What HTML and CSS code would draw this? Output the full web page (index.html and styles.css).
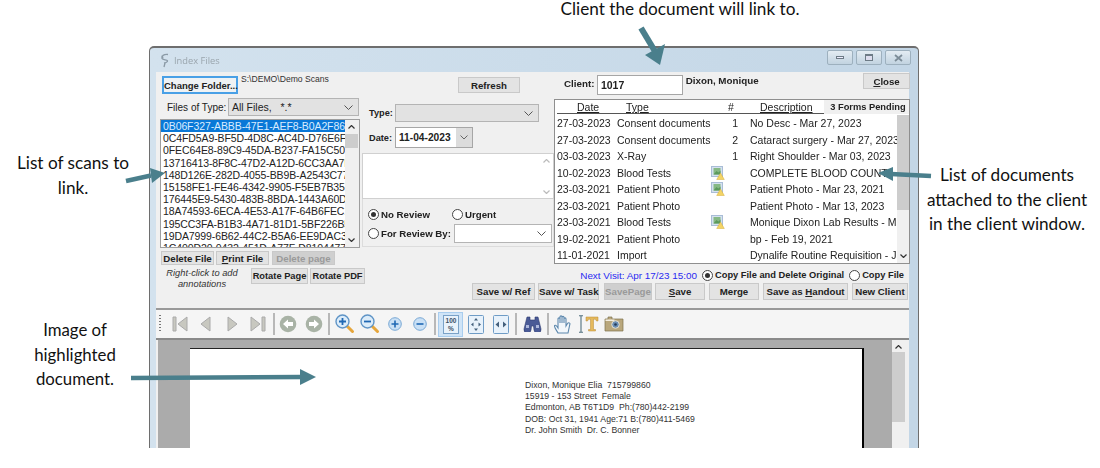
FILE: index.html
```html
<!DOCTYPE html>
<html lang="en">
<head>
<meta charset="utf-8">
<title>Index Files</title>
<link rel="stylesheet" href="styles.css">
</head>
<body>
<svg class="defs" width="0" height="0" aria-hidden="true">
  <symbol id="thumb" viewBox="0 0 14 14">
    <rect x="0.5" y="0.5" width="11" height="10" fill="#d5e1f0" stroke="#a9bdd6"/>
    <rect x="2.500" y="2" width="7" height="6.500" fill="#86b985"/>
    <path d="M2.500 8.500l3-3.500 2 1.500 2-2v4z" fill="#5c9a5c"/>
    <path d="M9.500 7l3.800 6.500H5.700z" fill="#f3d465" stroke="#d6ae3a" stroke-width=".5"/>
  </symbol>
  <symbol id="zoomlens" viewBox="0 0 20 20">
    <path d="M11.5 11.5l6 6" stroke="#e6a63c" stroke-width="3" stroke-linecap="round"/>
    <circle cx="7.5" cy="7.5" r="6.5" fill="#dcecf9" stroke="#5f94c6" stroke-width="1.4"/>
  </symbol>
</svg>

<p class="caption caption-top">Client the document will link to.</p>
<p class="caption caption-scans">List of scans to<br>link.</p>
<p class="caption caption-docs">List of documents<br>attached to the client<br>in the client window.</p>
<p class="caption caption-image">Image of<br>highlighted<br>document.</p>

<section class="window">
  <header class="titlebar">
    <svg class="app-icon" width="12" height="15" viewBox="0 0 12 15"><path d="M9 1.5C5 1 2 3 3 5.500c.8 1.800 5 .8 5.500 2.200.4 1.300-2 2-3.500 2.300M6 10l-1 4M3 2.500l1 3" fill="none" stroke="#8b9aa6" stroke-width="1.300"/></svg>
    <span class="title-text">Index Files</span>
    <div class="win-buttons">
      <span class="win-btn"><i class="glyph-min"></i></span>
      <span class="win-btn"><i class="glyph-max"></i></span>
      <span class="win-btn"><svg width="9" height="8" viewBox="0 0 9 8"><path d="M1 1l7 6M8 1L1 7" stroke="#7c8c98" stroke-width="1.800"/></svg></span>
    </div>
  </header>

  <div class="content">
    <div class="upper">
      <div class="col-left">
        <div class="folder-row">
          <button class="btn btn-focus">Change Folder...</button>
          <span class="path">S:\DEMO\Demo Scans</span>
        </div>
        <div class="type-row">
          <span class="type-label">Files of Type:</span>
          <div class="select select-files"><span>All Files,&nbsp;&nbsp; *.*</span><svg class="chev" width="9" height="5" viewBox="0 0 9 5"><path d="M.5.5l4 4 4-4" fill="none" stroke="#555"/></svg></div>
        </div>
        <div class="filelist">
          <div class="files">
            <div class="file file-selected">0B06F327-ABBB-47E1-AEF8-B0A2F86A6E3C</div>
            <div class="file">0C4FD5A9-BF5D-4D8C-AC4D-D76E6FF1A2B0</div>
            <div class="file">0FEC64E8-89C9-45DA-B237-FA15C5071D2E</div>
            <div class="file">13716413-8F8C-47D2-A12D-6CC3AA7B91F0</div>
            <div class="file">148D126E-282D-4055-BB9B-A2543C77D1A0</div>
            <div class="file">15158FE1-FE46-4342-9905-F5EB7B357C11</div>
            <div class="file">176445E9-5430-483B-8BDA-1443A60D0C12</div>
            <div class="file">18A74593-6ECA-4E53-A17F-64B6FEC1C0A1</div>
            <div class="file">195CC3FA-B1B3-4A71-81D1-5BF226B5E1F0</div>
            <div class="file">19DA7999-6B62-44C2-B5A6-EE9DAC32A0D1</div>
            <div class="file">1C400D20-0432-451D-A77F-D8104477A1B2</div>
          </div>
          <div class="scroll scroll-list">
            <svg class="arrow-up" width="7" height="4" viewBox="0 0 7 4"><path d="M.5 3.500l3-3 3 3" fill="none" stroke="#333" stroke-width="1.200"/></svg>
            <i class="thumb-list"></i>
            <svg class="arrow-down" width="7" height="4" viewBox="0 0 7 4"><path d="M.5.500l3 3 3-3" fill="none" stroke="#333" stroke-width="1.200"/></svg>
          </div>
        </div>
        <div class="file-actions">
          <button class="btn btn-file">Delete File</button>
          <button class="btn btn-file"><u>P</u>rint File</button>
          <button class="btn btn-file btn-disabled">Delete page</button>
        </div>
      </div>

      <div class="col-mid">
        <button class="btn btn-refresh">Refresh</button>
        <div class="field-row field-type">
          <label class="field-label">Type:</label>
          <div class="select select-type"><svg class="chev" width="9" height="5" viewBox="0 0 9 5"><path d="M.5.5l4 4 4-4" fill="none" stroke="#555"/></svg></div>
        </div>
        <div class="field-row field-date">
          <label class="field-label">Date:</label>
          <div class="date-input"><span>11-04-2023</span><i class="date-drop"><svg width="8" height="5" viewBox="0 0 8 5"><path d="M.5.5l3.500 3.500 3.500-3.500" fill="none" stroke="#666"/></svg></i></div>
        </div>
        <div class="notes">
          <div class="notes-scroll">
            <svg width="7" height="4" viewBox="0 0 7 4"><path d="M.5 3.500l3-3 3 3" fill="none" stroke="#bbb" stroke-width="1.200"/></svg>
            <svg width="7" height="4" viewBox="0 0 7 4"><path d="M.5.500l3 3 3-3" fill="none" stroke="#bbb" stroke-width="1.200"/></svg>
          </div>
        </div>
        <div class="review">
          <div class="review-row">
            <span class="radio radio-on"></span><span class="review-label review-none">No Review</span>
            <span class="radio"></span><span class="review-label">Urgent</span>
          </div>
          <div class="review-row review-row-by">
            <span class="radio"></span><span class="review-label review-by">For Review By:</span>
            <div class="select select-review"><svg class="chev" width="9" height="5" viewBox="0 0 9 5"><path d="M.5.5l4 4 4-4" fill="none" stroke="#555"/></svg></div>
          </div>
        </div>
      </div>

      <div class="col-right">
        <div class="client-row">
          <label class="client-label">Client:</label>
          <div class="client-input">1017</div>
          <span class="client-name">Dixon, Monique</span>
          <button class="btn btn-close"><u>C</u>lose</button>
        </div>
        <div class="doctable">
          <div class="doc-head">
            <div class="doc-cols">
              <span class="h-date">Date</span><span class="h-type">Type</span><span class="h-num">#</span><span class="h-desc">Description</span>
            </div>
            <span class="forms-tab">3 Forms Pending</span>
          </div>
          <div class="doc-body">
            <div class="doc-rows">
              <div class="doc-row"><span>27-03-2023</span><span>Consent documents</span><span></span><span class="num">1</span><span class="desc">No Desc - Mar 27, 2023</span></div>
              <div class="doc-row"><span>27-03-2023</span><span>Consent documents</span><span></span><span class="num">2</span><span class="desc">Cataract surgery - Mar 27, 2023</span></div>
              <div class="doc-row"><span>03-03-2023</span><span>X-Ray</span><span></span><span class="num">1</span><span class="desc">Right Shoulder - Mar 03, 2023</span></div>
              <div class="doc-row"><span>10-02-2023</span><span>Blood Tests</span><svg class="thumb" width="14" height="14"><use href="#thumb"/></svg><span class="num"></span><span class="desc">COMPLETE BLOOD COUNT</span></div>
              <div class="doc-row"><span>23-03-2021</span><span>Patient Photo</span><svg class="thumb" width="14" height="14"><use href="#thumb"/></svg><span class="num"></span><span class="desc">Patient Photo - Mar 23, 2021</span></div>
              <div class="doc-row"><span>23-03-2021</span><span>Patient Photo</span><span></span><span class="num"></span><span class="desc">Patient Photo - Mar 13, 2023</span></div>
              <div class="doc-row"><span>23-03-2021</span><span>Blood Tests</span><svg class="thumb" width="14" height="14"><use href="#thumb"/></svg><span class="num"></span><span class="desc">Monique Dixon Lab Results - Mar</span></div>
              <div class="doc-row"><span>19-02-2021</span><span>Patient Photo</span><span></span><span class="num"></span><span class="desc">bp - Feb 19, 2021</span></div>
              <div class="doc-row"><span>11-01-2021</span><span>Import</span><span></span><span class="num"></span><span class="desc">Dynalife Routine Requisition - Jan</span></div>
            </div>
            <div class="scroll scroll-docs">
              <i class="thumb-docs"></i>
              <svg class="arrow-down" width="7" height="4" viewBox="0 0 7 4"><path d="M.5.500l3 3 3-3" fill="none" stroke="#333" stroke-width="1.200"/></svg>
            </div>
          </div>
        </div>
      </div>
    </div>

    <div class="lower">
      <p class="annot-hint">Right-click to add annotations</p>
      <div class="rotate-btns">
        <button class="btn btn-rotate">Rotate Page</button>
        <button class="btn btn-rotate">Rotate PDF</button>
      </div>
      <div class="save-area">
        <div class="visit-row">
          <span class="next-visit">Next Visit: Apr 17/23 15:00</span>
          <span class="radio radio-on"></span><span class="review-label">Copy File and Delete Original</span>
          <span class="radio radio-copy"></span><span class="review-label">Copy File</span>
        </div>
        <div class="save-row">
          <button class="btn b-ref">Save w/ Ref</button>
          <button class="btn b-task">Save w/ Task</button>
          <button class="btn b-page btn-disabled">SavePage</button>
          <button class="btn b-save"><u>S</u>ave</button>
          <button class="btn b-merge">Merge</button>
          <button class="btn b-hand">Save as <u>H</u>andout</button>
          <button class="btn b-new">New Client</button>
        </div>
      </div>
    </div>

    <div class="toolbar">
      <i class="grip"></i>
      <svg class="t t-first" width="16" height="16" viewBox="0 0 16 16"><path d="M1 1h3v14H1z" fill="#c8c8c0" stroke="#aaa"/><path d="M15 1v14L6 8z" fill="#c8c8c0" stroke="#aaa"/></svg>
      <svg class="t t-prev" width="11" height="16" viewBox="0 0 11 16"><path d="M10 1v14L1 8z" fill="#c8c8c0" stroke="#aaa"/></svg>
      <svg class="t t-next" width="11" height="16" viewBox="0 0 11 16"><path d="M1 1v14l9-7z" fill="#c8c8c0" stroke="#aaa"/></svg>
      <svg class="t t-last" width="16" height="16" viewBox="0 0 16 16"><path d="M12 1h3v14h-3z" fill="#c8c8c0" stroke="#aaa"/><path d="M1 1v14l9-7z" fill="#c8c8c0" stroke="#aaa"/></svg>
      <i class="sep s1"></i>
      <svg class="t t-back" width="18" height="18" viewBox="0 0 18 18"><circle cx="9" cy="9" r="8.300" fill="#a9b3a6"/><path d="M4 9l5-4.500V7h5v4H9v2.500z" fill="#fff"/></svg>
      <svg class="t t-fwd" width="18" height="18" viewBox="0 0 18 18"><circle cx="9" cy="9" r="8.300" fill="#a9b3a6"/><path d="M14 9L9 4.500V7H4v4h5v2.500z" fill="#fff"/></svg>
      <i class="sep s2"></i>
      <svg class="t t-zi" width="20" height="20" viewBox="0 0 20 20"><use href="#zoomlens"/><path d="M4 7.500h7M7.500 4v7" stroke="#1f68b4" stroke-width="1.800"/></svg>
      <svg class="t t-zo" width="20" height="20" viewBox="0 0 20 20"><use href="#zoomlens"/><path d="M4 7.500h7" stroke="#1f68b4" stroke-width="1.800"/></svg>
      <svg class="t t-pl" width="14" height="14" viewBox="0 0 14 14"><circle cx="7" cy="7" r="6.300" fill="#c9e0f5" stroke="#79a8d4"/><path d="M3.500 7h7M7 3.500v7" stroke="#1f68b4" stroke-width="1.600"/></svg>
      <svg class="t t-mi" width="14" height="14" viewBox="0 0 14 14"><circle cx="7" cy="7" r="6.300" fill="#c9e0f5" stroke="#79a8d4"/><path d="M3.500 7h7" stroke="#1f68b4" stroke-width="1.600"/></svg>
      <i class="sep s3"></i>
      <span class="t-active"><svg width="16" height="19" viewBox="0 0 16 19"><rect x=".5" y=".5" width="15" height="18" fill="#e8f2fb" stroke="#7aa2c8"/><text x="8" y="8" class="t-100">100</text><text x="8" y="16" class="t-100">%</text></svg></span>
      <svg class="t t-fitp" width="16" height="19" viewBox="0 0 16 19"><rect x=".5" y=".5" width="15" height="18" rx="1" fill="#e8f2fb" stroke="#6f9cc6"/><path d="M8 3l2 2.500H6zM8 16l-2-2.500h4zM3 9.500L5.500 7.500v4zM13 9.500l-2.500-2v4z" fill="#44607c"/></svg>
      <svg class="t t-fitw" width="16" height="19" viewBox="0 0 16 19"><rect x=".5" y=".5" width="15" height="18" rx="1" fill="#e8f2fb" stroke="#6f9cc6"/><path d="M2.500 9.500L6 6.500v6zM13.500 9.500L10 6.500v6z" fill="#44607c"/></svg>
      <i class="sep s4"></i>
      <svg class="t t-bin" width="19" height="16" viewBox="0 0 19 16"><path d="M4 1h3v3h5V1h3l3 12a3 3 0 0 1-7 1l-.5-4h-2L8 14a3 3 0 0 1-7-1z" fill="#4a5a96" stroke="#2e3a70" stroke-width=".6"/><path d="M3 9h3v3H3zM13 9h3v3h-3z" fill="#aeb8dc"/></svg>
      <i class="sep s5"></i>
      <svg class="t t-hand" width="19" height="20" viewBox="0 0 19 20"><path d="M4 19c-1-2-3.500-5-3.500-7 0-1 1.500-1 2.500.5L4 14V5c0-1.500 2-1.500 2 0v4V3c0-1.500 2-1.500 2 0v6V3.500c0-1.500 2-1.500 2 0V9V5c0-1.500 2-1.500 2 0v7l1.500-2.500c1-1.500 3-.5 2.300 1L14 19z" fill="#f2f7fb" stroke="#5d88ad" stroke-width="1.100"/></svg>
      <svg class="t t-text" width="20" height="18" viewBox="0 0 20 18"><path d="M0 .7h4M0 17.300h4M2 .7v16.600" stroke="#51707f" stroke-width="1.100" fill="none"/><path d="M7 2h12v4h-1.500l-1-1.800h-2V14.500h2V16H9.500v-1.500h2V4.200h-2l-1 1.800H7z" fill="#e5b95c" stroke="#b98b32" stroke-width=".5"/></svg>
      <svg class="t t-cam" width="20" height="16" viewBox="0 0 20 16"><path d="M1 3h3V1h4v2h11v12H1z" fill="#b9a77c" stroke="#80734f" stroke-width=".7"/><rect x="1.500" y="3.500" width="9" height="1.500" fill="#f3eee0"/><circle cx="11.500" cy="8.500" r="3.800" fill="#6b8fb5" stroke="#e5e1d2"/><circle cx="11.500" cy="8.500" r="1.300" fill="#233a58"/></svg>
    </div>

    <div class="viewer">
      <div class="canvas">
        <article class="page">
          <p class="page-text">Dixon, Monique Elia&nbsp; 715799860<br>15919 - 153 Street&nbsp; Female<br>Edmonton, AB T6T1D9&nbsp; Ph:(780)442-2199<br>DOB: Oct 31, 1941 Age:71 B:(780)411-5469<br>Dr. John Smith&nbsp; Dr. C. Bonner</p>
        </article>
      </div>
      <div class="scroll scroll-viewer">
        <svg class="arrow-up" width="7" height="4" viewBox="0 0 7 4"><path d="M.5 3.500l3-3 3 3" fill="none" stroke="#333" stroke-width="1.200"/></svg>
        <i class="thumb-viewer"></i>
      </div>
    </div>
  </div>
</section>

<svg class="callouts" width="1100" height="468" viewBox="0 0 1100 468" aria-hidden="true">
  <path d="M641 28l15 25" stroke="#4a7f8c" stroke-width="6"/><path d="M645 55l20-11-5 21z" fill="#4a7f8c"/>
  <path d="M126 181l25-5.500" stroke="#4a7f8c" stroke-width="4.500"/><path d="M150 168l15 5-13 10z" fill="#4a7f8c"/>
  <path d="M931 176l-40-2" stroke="#4a7f8c" stroke-width="4.500"/><path d="M893 167l-15 6 15 8z" fill="#4a7f8c"/>
  <path d="M131 378l170-1" stroke="#4a7f8c" stroke-width="4.500"/><path d="M300 369l16 8-16 8z" fill="#4a7f8c"/>
</svg>
</body>
</html>
```
FILE: styles.css
```css
* { box-sizing: border-box; }
html, body { margin: 0; padding: 0; }
body {
  position: relative;
  width: 1100px;
  height: 468px;
  overflow: hidden;
  background: #fff;
  font-family: "Liberation Sans", Arial, sans-serif;
}
.defs { position: absolute; }

/* callouts around the window */
.caption {
  position: absolute;
  margin: 0;
  font: 17.200px/24.500px Lato, "Open Sans", sans-serif;
  color: #111;
  text-align: center;
}
.caption-top { left: 540px; top: -3px; width: 280px; }
.caption-scans { left: 0; top: 151px; width: 146px; }
.caption-docs { left: 915px; top: 163px; width: 184px; }
.caption-image { left: 10px; top: 318px; width: 130px; font-size: 16.800px; }
.callouts { position: absolute; left: 0; top: 0; pointer-events: none; }

/* window */
.window {
  position: absolute;
  left: 149px;
  top: 46px;
  width: 770px;
  height: 402px;
  display: flex;
  flex-direction: column;
  padding: 0 9px 0 6px;
  border: 1px solid #6e6e6e;
  border-top-width: 2px;
  border-bottom: 0;
  border-radius: 5px 5px 0 0;
  background: linear-gradient(90deg, #d3e2ee, #c3d6e6);
  filter: blur(.35px);
  font-size: 10.500px;
  color: #222;
}
.titlebar { height: 24px; flex: none; display: flex; align-items: center; position: relative; }
.app-icon { margin: 0 0 0 3px; }
.title-text { margin-left: 3px; font-size: 9.300px; color: #9aa5ad; font-family: "Open Sans", sans-serif; }
.win-buttons { margin-left: auto; margin-right: -2px; display: flex; gap: 3px; margin-top: -5px; }
.win-btn {
  width: 26px; height: 15px;
  display: flex; align-items: center; justify-content: center;
  border: 1px solid #9db0be; border-radius: 2px;
  background: linear-gradient(#e3ecf3, #c2d3e0);
}
.glyph-min { width: 8px; height: 3px; border: 1px solid #6d7b86; background: #eef; }
.glyph-max { width: 8px; height: 7px; border: 1px solid #6d7b86; border-top-width: 2px; background: #dde; }

.content { flex: 1; display: flex; flex-direction: column; background: #f0f0f0; min-height: 0; }

/* upper region */
.upper { display: flex; height: 194px; flex: none; }
.col-left { width: 206px; padding: 4px 0 0 4px; flex: none; }
.col-mid { width: 192px; flex: none; padding-top: 5px; }
.col-right { width: 356px; flex: none; }

.btn {
  display: block;
  padding: 0; margin: 0;
  font: bold 9.700px "Liberation Sans", Arial, sans-serif;
  text-align: center;
  color: #222;
  background: #e3e3e3;
  border: 1px solid #c9c9c9;
  white-space: nowrap;
}
.btn-focus { width: 76px; height: 18px; margin-left: 2px; border: 2px solid #49a0e6; background: #eff2f4; font-size: 9.500px; }
.btn-disabled { color: #9a9a9a; background: #cfcfcf; }

.folder-row { display: flex; align-items: flex-start; height: 18px; }
.path { margin-left: 3px; margin-top: -2px; font-size: 8.600px; color: #333; white-space: nowrap; }
.type-row { display: flex; align-items: center; margin-top: 4px; height: 18px; }
.type-label { margin-left: 7px; width: 61px; font-size: 10px; white-space: nowrap; }
.select {
  position: relative;
  height: 18px;
  display: flex; align-items: center; padding-left: 3px;
  background: #e2e2e2;
  border: 1px solid #b4b4b4;
}
.chev { position: absolute; right: 5px; top: 6px; }
.select-files { width: 131px; font-size: 10.500px; }

.filelist {
  margin-top: 3px;
  width: 200px;
  height: 129px;
  display: flex;
  background: #fff;
  border: 1px solid #9e9e9e;
  overflow: hidden;
}
.files { width: 184px; overflow: hidden; font-size: 10.500px; line-height: 12.200px; letter-spacing: -.1px; }
.file { padding-left: 2px; white-space: nowrap; color: #222; }
.file-selected { background: #0a78d7; color: #d9ecff; }

.scroll { position: relative; background: #f0f0f0; flex: none; }
.scroll-list { width: 14px; }
.arrow-up { position: absolute; left: 3px; top: 5px; }
.arrow-down { position: absolute; left: 3px; bottom: 5px; }
.thumb-list { position: absolute; left: 0; top: 14px; width: 13px; height: 14px; background: #cdcdcd; }

.file-actions { display: flex; gap: 2px; margin: 3px 0 0 1px; }
.btn-file { height: 14px; width: 53px; }
.btn-file.btn-disabled { width: 63px; margin-left: 1px; }

.btn-refresh { width: 62px; height: 16px; margin-left: 96px; }
.field-row { display: flex; align-items: center; }
.field-label { width: 33px; padding-left: 7px; font-weight: bold; font-size: 9.200px; white-space: nowrap; }
.field-type { margin-top: 11px; }
.select-type { width: 144px; }
.field-date { margin-top: 5px; }
.date-input {
  width: 78px; height: 21px;
  display: flex; align-items: center; justify-content: space-between;
  padding-left: 3px;
  background: #fff;
  border: 1px solid #a6a6a6;
  font-weight: bold; font-size: 10.200px;
}
.date-drop { width: 16px; height: 19px; display: flex; align-items: center; justify-content: center; background: #dcdcdc; }
.notes { margin-top: 5px; height: 46px; background: #fff; border: 1px solid #d0d0d0; display: flex; justify-content: flex-end; }
.notes-scroll { width: 14px; display: flex; flex-direction: column; justify-content: space-between; align-items: center; padding: 5px 0 4px; }
.review { height: 48px; border: 1px solid #dcdcdc; border-top: 0; padding: 9px 0 0 5px; }
.review-row { display: flex; align-items: center; height: 13px; }
.review-row-by { margin-top: 6px; }
.radio {
  position: relative; flex: none;
  width: 11px; height: 11px;
  border: 1px solid #444; border-radius: 50%;
  background: #fff;
}
.radio-on::after {
  content: ""; position: absolute; left: 2px; top: 2px;
  width: 5px; height: 5px; border-radius: 50%; background: #333;
}
.review-label { margin-left: 2px; font-weight: bold; font-size: 9.700px; white-space: nowrap; }
.review-none { width: 71px; }
.review-by { width: 73px; }
.select-review { width: 98px; height: 19px; background: #fff; }

.client-row { display: flex; align-items: flex-start; height: 27px; padding-left: 10px; }
.client-label { margin-top: 6px; width: 33px; font-weight: bold; font-size: 9.800px; }
.client-input {
  margin-top: 3px; width: 86px; height: 20px;
  padding: 3px 0 0 3px;
  background: #fff; border: 1px solid #a6a6a6;
  font-weight: bold; font-size: 10.500px;
}
.client-name { margin: 3px 0 0 3px; font-weight: bold; font-size: 9.800px; width: 178px; }
.btn-close { width: 47px; height: 16px; margin-top: 1px; }

.doctable { width: 356px; height: 165px; background: #fff; border: 1px solid #8f8f8f; display: flex; flex-direction: column; }
.doc-head { display: flex; height: 15px; flex: none; font-size: 10.500px; }
.doc-cols { position: relative; width: 268px; margin-left: 2px; border-bottom: 1px solid #555; height: 14px; }
.doc-cols span { position: absolute; top: 1px; text-decoration: underline; }
.h-date { left: 20px; }
.h-type { left: 69px; }
.h-num { left: 171px; text-decoration: none !important; }
.h-desc { left: 203px; }
.forms-tab {
  margin-left: 0; width: 85px; height: 14px; padding-left: 6px;
  background: #f0f0f0; font-weight: bold; font-size: 9.300px; line-height: 14px; white-space: nowrap;
}
.doc-body { flex: 1; display: flex; min-height: 0; }
.doc-rows { width: 342px; overflow: hidden; font-size: 10.500px; }
.doc-row {
  display: grid;
  grid-template-columns: 60px 95px 15px 11px 1fr;
  align-items: center;
  height: 16.500px;
  padding-left: 2px;
  white-space: nowrap;
}
.thumb { display: block; margin-left: -1px; }
.num { text-align: right; }
.desc { margin-left: 12px; overflow: hidden; }
.scroll-docs { width: 12px; background: #f0f0f0; }
.thumb-docs { position: absolute; left: 0; top: 0; width: 12px; height: 95px; background: #cdcdcd; }

/* lower strip */
.lower { display: flex; height: 42px; flex: none; }
.annot-hint {
  margin: 2px 0 0 5px; width: 82px; flex: none;
  font: italic 9.300px/11px "Liberation Sans", Arial, sans-serif;
  text-align: center; color: #333;
}
.rotate-btns { display: flex; gap: 2px; margin: 2px 0 0 8px; }
.btn-rotate { width: 57px; height: 16px; font-size: 9.300px; }
.rotate-btns .btn-rotate + .btn-rotate { width: 55px; }
.save-area { margin-left: auto; margin-right: 1px; display: flex; flex-direction: column; align-items: flex-end; width: 440px; }
.visit-row { display: flex; align-items: center; height: 16px; margin-top: 1px; padding-right: 4px; }
.visit-row .review-label { font-size: 9.300px; }
.next-visit { color: #2a2af0; font-size: 9.900px; margin-right: 5px; }
.radio-copy { margin-left: 5px; }
.save-row { display: flex; height: 17px; }
.save-row .btn { height: 17px; }
.b-ref { width: 63px; }
.b-task { width: 61px; margin-left: 3px; }
.b-page { width: 48px; margin-left: 5px; }
.b-save { width: 50px; margin-left: 3px; }
.b-merge { width: 50px; margin-left: 4px; }
.b-hand { width: 85px; margin-left: 4px; }
.b-new { width: 56px; margin-left: 4px; }

/* toolbar */
.toolbar {
  flex: none; height: 30px;
  display: flex; align-items: center;
  border-top: 2px solid #999;
  background: #f5f5f5;
  padding-left: 3px;
}
.grip { width: 2px; height: 18px; background: repeating-linear-gradient(#777 0 1px, transparent 1px 3px); }
.t { flex: none; display: block; }
.sep { flex: none; width: 2px; height: 22px; background: #b8b8b8; }
.t-first { margin-left: 11px; }
.t-prev { margin-left: 12px; }
.t-next { margin-left: 16px; }
.t-last { margin-left: 12px; }
.s1 { margin-left: 7px; }
.t-back { margin-left: 4px; }
.t-fwd { margin-left: 8px; }
.s2 { margin-left: 5px; }
.t-zi { margin-left: 5px; }
.t-zo { margin-left: 5px; }
.t-pl { margin-left: 8px; }
.t-mi { margin-left: 11px; }
.s3 { margin-left: 7px; }
.t-active {
  flex: none; margin-left: 2px; width: 25px; height: 25px;
  display: flex; align-items: center; justify-content: center;
  background: #cfe4f7; border: 1px solid #a9cdee;
}
.t-100 { font: bold 6.500px "Liberation Sans", Arial, sans-serif; text-anchor: middle; fill: #3a4f66; }
.t-fitp { margin-left: 5px; }
.t-fitw { margin-left: 9px; }
.s4 { margin-left: 6px; }
.t-bin { margin-left: 6px; }
.s5 { margin-left: 5px; }
.t-hand { margin-left: 5px; }
.t-text { margin-left: 6px; }
.t-cam { margin-left: 5px; }

/* document viewer */
.viewer { flex: 1; min-height: 0; display: flex; padding-left: 2px; border-top: 2px solid #8a8a8a; }
.canvas { width: 734px; flex: none; background: #ababab; padding: 8px 0 0 32px; overflow: hidden; }
.page {
  width: 674px; height: 120px;
  background: #fff;
  border-top: 1px solid #222;
  border-right: 2px solid #000;
  padding: 31px 0 0 335px;
}
.page-text { margin: 0; font-size: 8.700px; line-height: 11.200px; color: #333; white-space: nowrap; }
.scroll-viewer { width: 13px; background: #f0f0f0; }
.thumb-viewer { position: absolute; left: 0; top: 12px; width: 13px; height: 70px; background: #cdcdcd; }
```
